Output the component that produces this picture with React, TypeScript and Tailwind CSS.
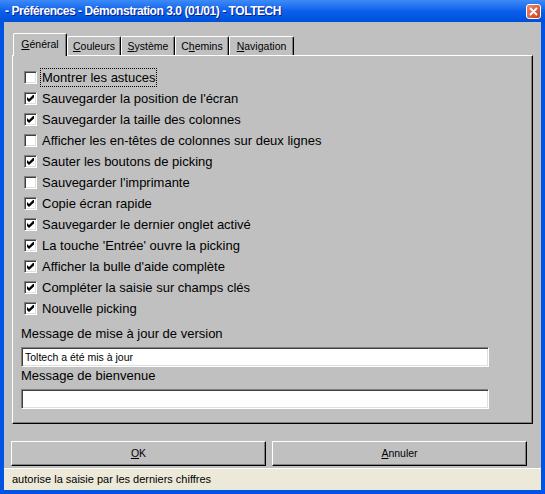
import React from 'react';

const options = [
    { label: 'Montrer les astuces', checked: false, focused: true },
    { label: "Sauvegarder la position de l'écran", checked: true },
    { label: 'Sauvegarder la taille des colonnes', checked: true },
    { label: 'Afficher les en-têtes de colonnes sur deux lignes', checked: false },
    { label: 'Sauter les boutons de picking', checked: true },
    { label: "Sauvegarder l'imprimante", checked: false },
    { label: 'Copie écran rapide', checked: true },
    { label: 'Sauvegarder le dernier onglet activé', checked: true },
    { label: "La touche 'Entrée' ouvre la picking", checked: true },
    { label: "Afficher la bulle d'aide complète", checked: true },
    { label: 'Compléter la saisie sur champs clés', checked: true },
    { label: 'Nouvelle picking', checked: true },
];

const Checkbox = ({ checked }: { checked: boolean }) => (
    <div className="w-[13px] h-[13px] shrink-0 bg-white border border-t-[#808080] border-l-[#808080] border-r-white border-b-white shadow-[inset_1px_1px_#404040,inset_-1px_-1px_#dfdfdf] flex items-center justify-center">
        {checked && (
            <svg width="7" height="7" viewBox="0 0 7 7">
                <path d="M0 2 L2 4 L6 0 L7 0 L7 2.5 L2 7 L0 5 Z" fill="#000" />
            </svg>
        )}
    </div>
);

const Tab = ({ children, width, active }: { children: React.ReactNode; width: string; active?: boolean }) => (
    <div
        className={
            active
                ? `relative z-10 -mb-px h-[23px] ${width} bg-[#c0c0c0] border-t border-l border-t-white border-l-white border-r border-r-black shadow-[inset_-1px_0_#808080] rounded-tl-[2px] rounded-tr-[2px] flex items-start justify-center pt-[3px] text-[10.5px] text-black`
                : `h-[19px] ${width} bg-[#c0c0c0] border-t border-l border-t-white border-l-white border-r border-r-black shadow-[inset_-1px_0_#808080] rounded-tl-[2px] rounded-tr-[2px] flex items-start justify-center pt-[2px] text-[10.5px] text-black`
        }
    >
        {children}
    </div>
);

const TextBox = ({ value }: { value: string }) => (
    <input
        readOnly
        value={value}
        className="mt-[4px] w-[468px] h-[20px] bg-white border border-t-[#808080] border-l-[#808080] border-r-white border-b-white shadow-[inset_1px_1px_#404040,inset_-1px_-1px_#dfdfdf] pl-[3px] text-[10.5px] text-black outline-none"
    />
);

const WinButton = ({ children }: { children: React.ReactNode }) => (
    <button className="w-[255px] h-[25px] bg-[#c0c0c0] border border-t-white border-l-white border-r-black border-b-black shadow-[inset_-1px_-1px_#808080] text-[10.5px] text-black flex items-center justify-center">
        {children}
    </button>
);

export default function App() {
    return (
        <div className="w-[545px] h-[494px] flex flex-col bg-[#0054e3] overflow-hidden font-['Liberation_Sans',Arial,sans-serif]">
            {/* Title bar */}
            <div className="h-[22px] shrink-0 flex items-center pl-[5px] pr-[4px] bg-gradient-to-b from-[#3d8bf7] via-[#0a5fec] to-[#0050d8]">
                <span className="flex-1 text-white font-bold text-[12px] tracking-[-0.45px] [text-shadow:1px_1px_#0a1f8f]">
                    - Préférences - Démonstration 3.0 (01/01) - TOLTECH
                </span>
                <div className="w-[15px] h-[15px] rounded-[3px] border border-white bg-gradient-to-br from-[#f08a6a] to-[#c73a18] flex items-center justify-center">
                    <svg width="9" height="9" viewBox="0 0 9 9">
                        <path d="M1.5 1.5 L7.5 7.5 M7.5 1.5 L1.5 7.5" stroke="#fff" strokeWidth="1.8" strokeLinecap="round" />
                    </svg>
                </div>
            </div>

            {/* Body */}
            <div className="flex-1 mx-[4px] mb-[4px] bg-[#c0c0c0] flex flex-col">
                <div className="pt-[11px] px-[8px]">
                    <div className="h-[22px] flex items-end pl-px">
                        <Tab width="w-[54px]" active>
                            <span><span className="underline">G</span>énéral</span>
                        </Tab>
                        <Tab width="w-[54px]">
                            <span><span className="underline">C</span>ouleurs</span>
                        </Tab>
                        <Tab width="w-[54px]">
                            <span><span className="underline">S</span>ystème</span>
                        </Tab>
                        <Tab width="w-[54px]">
                            <span>C<span className="underline">h</span>emins</span>
                        </Tab>
                        <Tab width="w-[65px]">
                            <span><span className="underline">N</span>avigation</span>
                        </Tab>
                    </div>

                    {/* Panel */}
                    <div className="h-[369px] border border-t-white border-l-white border-r-black border-b-black shadow-[inset_-1px_-1px_#808080] pt-[11px] pl-[8px]">
                        <div className="pl-[3px] flex flex-col">
                            {options.map((o) => (
                                <div key={o.label} className="h-[21px] flex items-center">
                                    <Checkbox checked={o.checked} />
                                    <span
                                        className={
                                            o.focused
                                                ? 'ml-[3px] px-px border border-dotted border-black leading-[17px] text-[13px] text-black'
                                                : 'ml-[3px] px-px border border-transparent leading-[17px] text-[13px] text-black'
                                        }
                                    >
                                        {o.label}
                                    </span>
                                </div>
                            ))}
                        </div>

                        <div className="mt-[6px] flex flex-col">
                            <span className="text-[13px] leading-[18px] text-black">Message de mise à jour de version</span>
                            <TextBox value="Toltech a été mis à jour" />
                            <span className="text-[13px] leading-[18px] text-black">Message de bienvenue</span>
                            <TextBox value="" />
                        </div>
                    </div>
                </div>

                <div className="mt-[17px] px-[7px] flex gap-[6px]">
                    <WinButton>
                        <span><span className="underline">O</span>K</span>
                    </WinButton>
                    <WinButton>
                        <span><span className="underline">A</span>nnuler</span>
                    </WinButton>
                </div>

                {/* Status bar */}
                <div className="mt-[2px] h-[22px] bg-[#ece9d8] border-t border-t-white flex items-center pl-[8px] text-[11px] text-black">
                    autorise la saisie par les derniers chiffres
                </div>
            </div>
        </div>
    );
}
